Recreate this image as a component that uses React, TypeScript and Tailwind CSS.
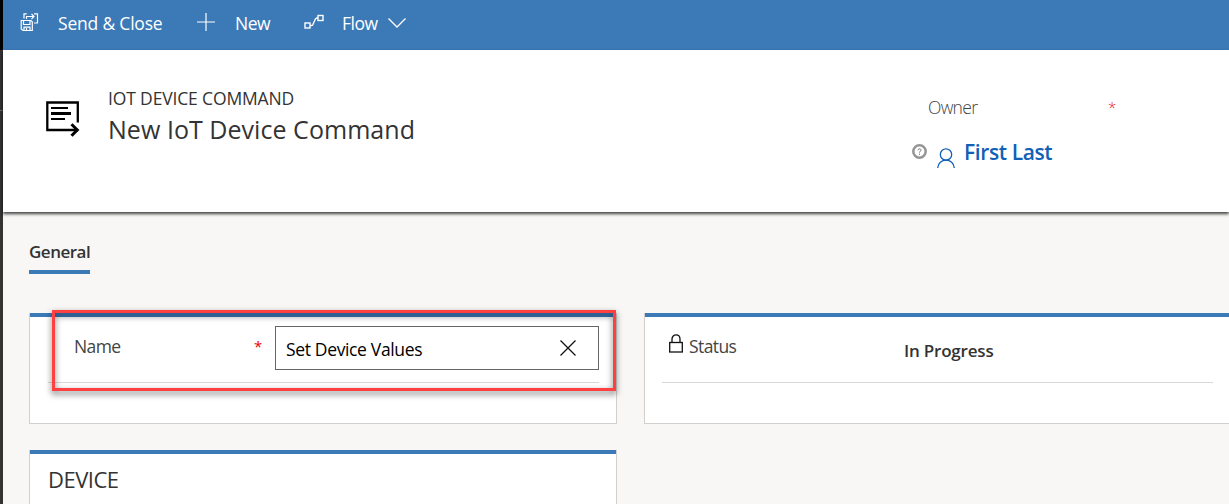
import type { ReactNode } from "react";

function SendCloseIcon() {
  return (
    <svg width="19" height="19" viewBox="0 0 19 19" fill="none" stroke="#fff" strokeWidth="1.2" className="block">
      <path d="M1.2 7.500h9.800l1.300 1.300v8.700H3L1.200 16z" />
      <path d="M3.500 7.500v4h6.500v-4M4 17.500v-3.300h6v3.300M6.500 15v2" />
      <path d="M4 5.500V.8h2.800M14 .8h3.500v9.200H14" />
      <path d="M6.500 6V3.500h7.500M11.500 1l2.500 2.500L11.500 6" />
    </svg>
  );
}

function PlusIcon() {
  return (
    <svg width="18" height="18" viewBox="0 0 18 18" stroke="#fff" strokeWidth="1.2" className="block">
      <path d="M9 0v18M0 9h18" />
    </svg>
  );
}

function FlowIcon() {
  return (
    <svg width="20" height="15" viewBox="0 0 20 15" fill="none" stroke="#fff" strokeWidth="1.4" className="block">
      <rect x="1" y="9" width="5" height="5" />
      <rect x="14" y="1.500" width="5" height="5" />
      <path d="M6 11.500h1.300c1 0 1.300-.5 1.700-1.200l2.300-5c.4-.8.700-1.300 1.500-1.300H14" />
    </svg>
  );
}

function ChevronIcon() {
  return (
    <svg width="18" height="10" viewBox="0 0 18 10" fill="none" stroke="#fff" strokeWidth="1.300" className="block">
      <path d="M.5.500 9 9l8.500-8.500" />
    </svg>
  );
}

function CommandIcon() {
  return (
    <svg width="34" height="37" viewBox="0 0 34 37" fill="none" stroke="#000" className="block">
      <path d="M31.800 22.500V2.500H1.300V30H30" strokeWidth="2.300" />
      <path d="M5 8h17M5 19h14" strokeWidth="2" />
      <path d="M5 13.500h20" strokeWidth="3" />
      <path d="M25.500 24.200 31.300 30l-5.800 5.800" strokeWidth="3" />
    </svg>
  );
}

function HelpIcon() {
  return (
    <svg width="15" height="15" viewBox="0 0 15 15" fill="none" className="block">
      <circle cx="7.500" cy="7.500" r="6.200" stroke="#959595" strokeWidth="2.500" />
      <path d="M6 6.300c0-2 3-2 3-.2 0 1.100-1.500 1.100-1.500 2.500M7.500 9.600v1.200" stroke="#777" strokeWidth="1" />
    </svg>
  );
}

function PersonIcon() {
  return (
    <svg width="18" height="20" viewBox="0 0 18 20" fill="none" stroke="#1160b7" strokeWidth="1.300" className="block">
      <circle cx="9" cy="6.500" r="5.700" />
      <path d="M.7 20c.4-4.800 3.900-7.800 8.300-7.800s7.900 3 8.300 7.800" />
    </svg>
  );
}

function LockIcon() {
  return (
    <svg width="14" height="19" viewBox="0 0 14 19" fill="none" stroke="#111" strokeWidth="1.300" className="block">
      <rect x=".7" y="8.500" width="12.600" height="9.500" />
      <path d="M3 8.500V5c0-5.500 8-5.500 8 0v3.500" />
    </svg>
  );
}

function ClearIcon() {
  return (
    <svg width="16" height="16" viewBox="0 0 16 16" stroke="#111" strokeWidth="1.300" className="block">
      <path d="m.5.500 15 15M15.500.500l-15 15" />
    </svg>
  );
}

function Card({ className, children }: { className: string; children: ReactNode }) {
  return (
    <section className={`flex shrink-0 flex-col border-x border-b border-[#d2d0ce] bg-white ${className}`}>
      <div className="h-1 shrink-0 bg-[#3b79b7]" />
      {children}
    </section>
  );
}

export default function App() {
  return (
    <div className="flex h-[504px] w-[1229px] overflow-hidden bg-[#f8f7f6] font-['Open_Sans','Noto_Sans',sans-serif] text-[#333] whitespace-nowrap">
      <div className="flex w-[3px] shrink-0 flex-col bg-[#333]">
        <div className="h-[50px] bg-black" />
        <div className="mt-[60px] h-px bg-[#666]" />
      </div>
      <div className="flex min-w-0 flex-1 flex-col">
        <nav className="flex h-[50px] shrink-0 items-start bg-[#3b79b7] text-[17.500px] leading-6 text-white">
          <div className="flex w-[176px] pl-[17px]">
            <div className="mt-[13px] w-[38px]"><SendCloseIcon /></div>
            <span className="mt-[11px] tracking-[-0.2px]">Send &amp; Close</span>
          </div>
          <div className="flex w-[107px] pl-[18px]">
            <div className="mt-[13px] w-[38px]"><PlusIcon /></div>
            <span className="mt-[11px] tracking-[-0.5px]">New</span>
          </div>
          <div className="flex pl-[18px]">
            <div className="mt-[14px] w-[38px]"><FlowIcon /></div>
            <span className="mt-[11px] w-[46px] tracking-[-0.5px]">Flow</span>
            <div className="mt-[18px]"><ChevronIcon /></div>
          </div>
        </nav>

        <header className="z-10 flex h-[162px] shrink-0 bg-white shadow-[0_2px_3px_0_rgba(0,0,0,0.75)]">
          <div className="w-[105px] pt-[50px] pl-[43px]"><CommandIcon /></div>
          <div className="w-[804px] pt-9">
            <div className="text-[17.500px] leading-6 tracking-[-0.15px]">IOT DEVICE COMMAND</div>
            <h1 className="mt-[3px] text-[25px] leading-8 tracking-[0.04px]">New IoT Device Command</h1>
          </div>
          <div className="pt-[45px]">
            <div className="flex pl-4">
              <span className="w-[180px] text-[17.500px] leading-6 font-light tracking-[-0.7px] text-[#444]">Owner</span>
              <span className="text-[15px] leading-6 font-light text-[#e81123]">*</span>
            </div>
            <div className="flex pt-[17px]">
              <div className="mt-2 w-6"><HelpIcon /></div>
              <div className="mt-3 w-[28px] pl-px"><PersonIcon /></div>
              <span className="text-[21px] leading-8 font-semibold tracking-[-0.4px] text-[#1160b7]">First Last</span>
            </div>
          </div>
        </header>

        <main className="flex flex-1 flex-col pl-[26px]">
          <div className="mt-7 flex h-[33.500px] w-[61px] flex-col justify-between">
            <span className="text-[17px] leading-6 font-semibold tracking-[-0.5px]">General</span>
            <div className="h-1 shrink-0 bg-[#3b79b7]" />
          </div>
          <div className="mt-[39.500px] flex gap-[27px]">
            <Card className="relative h-[111px] w-[588px]">
              <div className="ml-[18px] flex h-[66px] w-[551px] shrink-0 border-b border-[#d8d8d8] pl-[26px]">
                <span className="mt-[17px] w-[180px] text-[17.500px] leading-6 tracking-[-0.6px] text-[#444]">Name</span>
                <span className="mt-[17px] w-[21px] text-[15px] leading-6 text-[#e00]">*</span>
                <div className="mt-[9px] flex h-[44px] w-[324px] shrink-0 items-center border border-[#666] pr-[22px] pl-[10px] text-black">
                  <span className="flex-1 pt-0.5 text-[17.500px] leading-6 tracking-[-0.35px]">Set Device Values</span>
                  <ClearIcon />
                </div>
              </div>
              <div className="absolute top-[-3px] left-[22px] h-[81px] w-[564px] border-[3px] border-[#ff4040] drop-shadow-[0_3px_3px_rgba(0,0,0,0.6)]" />
            </Card>
            <Card className="h-[111px] w-[600px]">
              <div className="ml-[17px] flex h-[66px] w-[551px] shrink-0 border-b border-[#d8d8d8] pl-[7px]">
                <div className="mt-[17px] w-5"><LockIcon /></div>
                <span className="mt-[17px] w-[215px] text-[17.500px] leading-6 tracking-[-0.6px] text-[#444]">Status</span>
                <span className="mt-[22px] text-[17px] leading-6 font-semibold tracking-[-0.2px]">In Progress</span>
              </div>
            </Card>
          </div>
          <Card className="mt-[26px] h-[120px] w-[588px]">
            <h2 className="mt-[9px] ml-[18px] text-[22px] leading-8 tracking-[-0.5px]">DEVICE</h2>
          </Card>
        </main>
      </div>
    </div>
  );
}
